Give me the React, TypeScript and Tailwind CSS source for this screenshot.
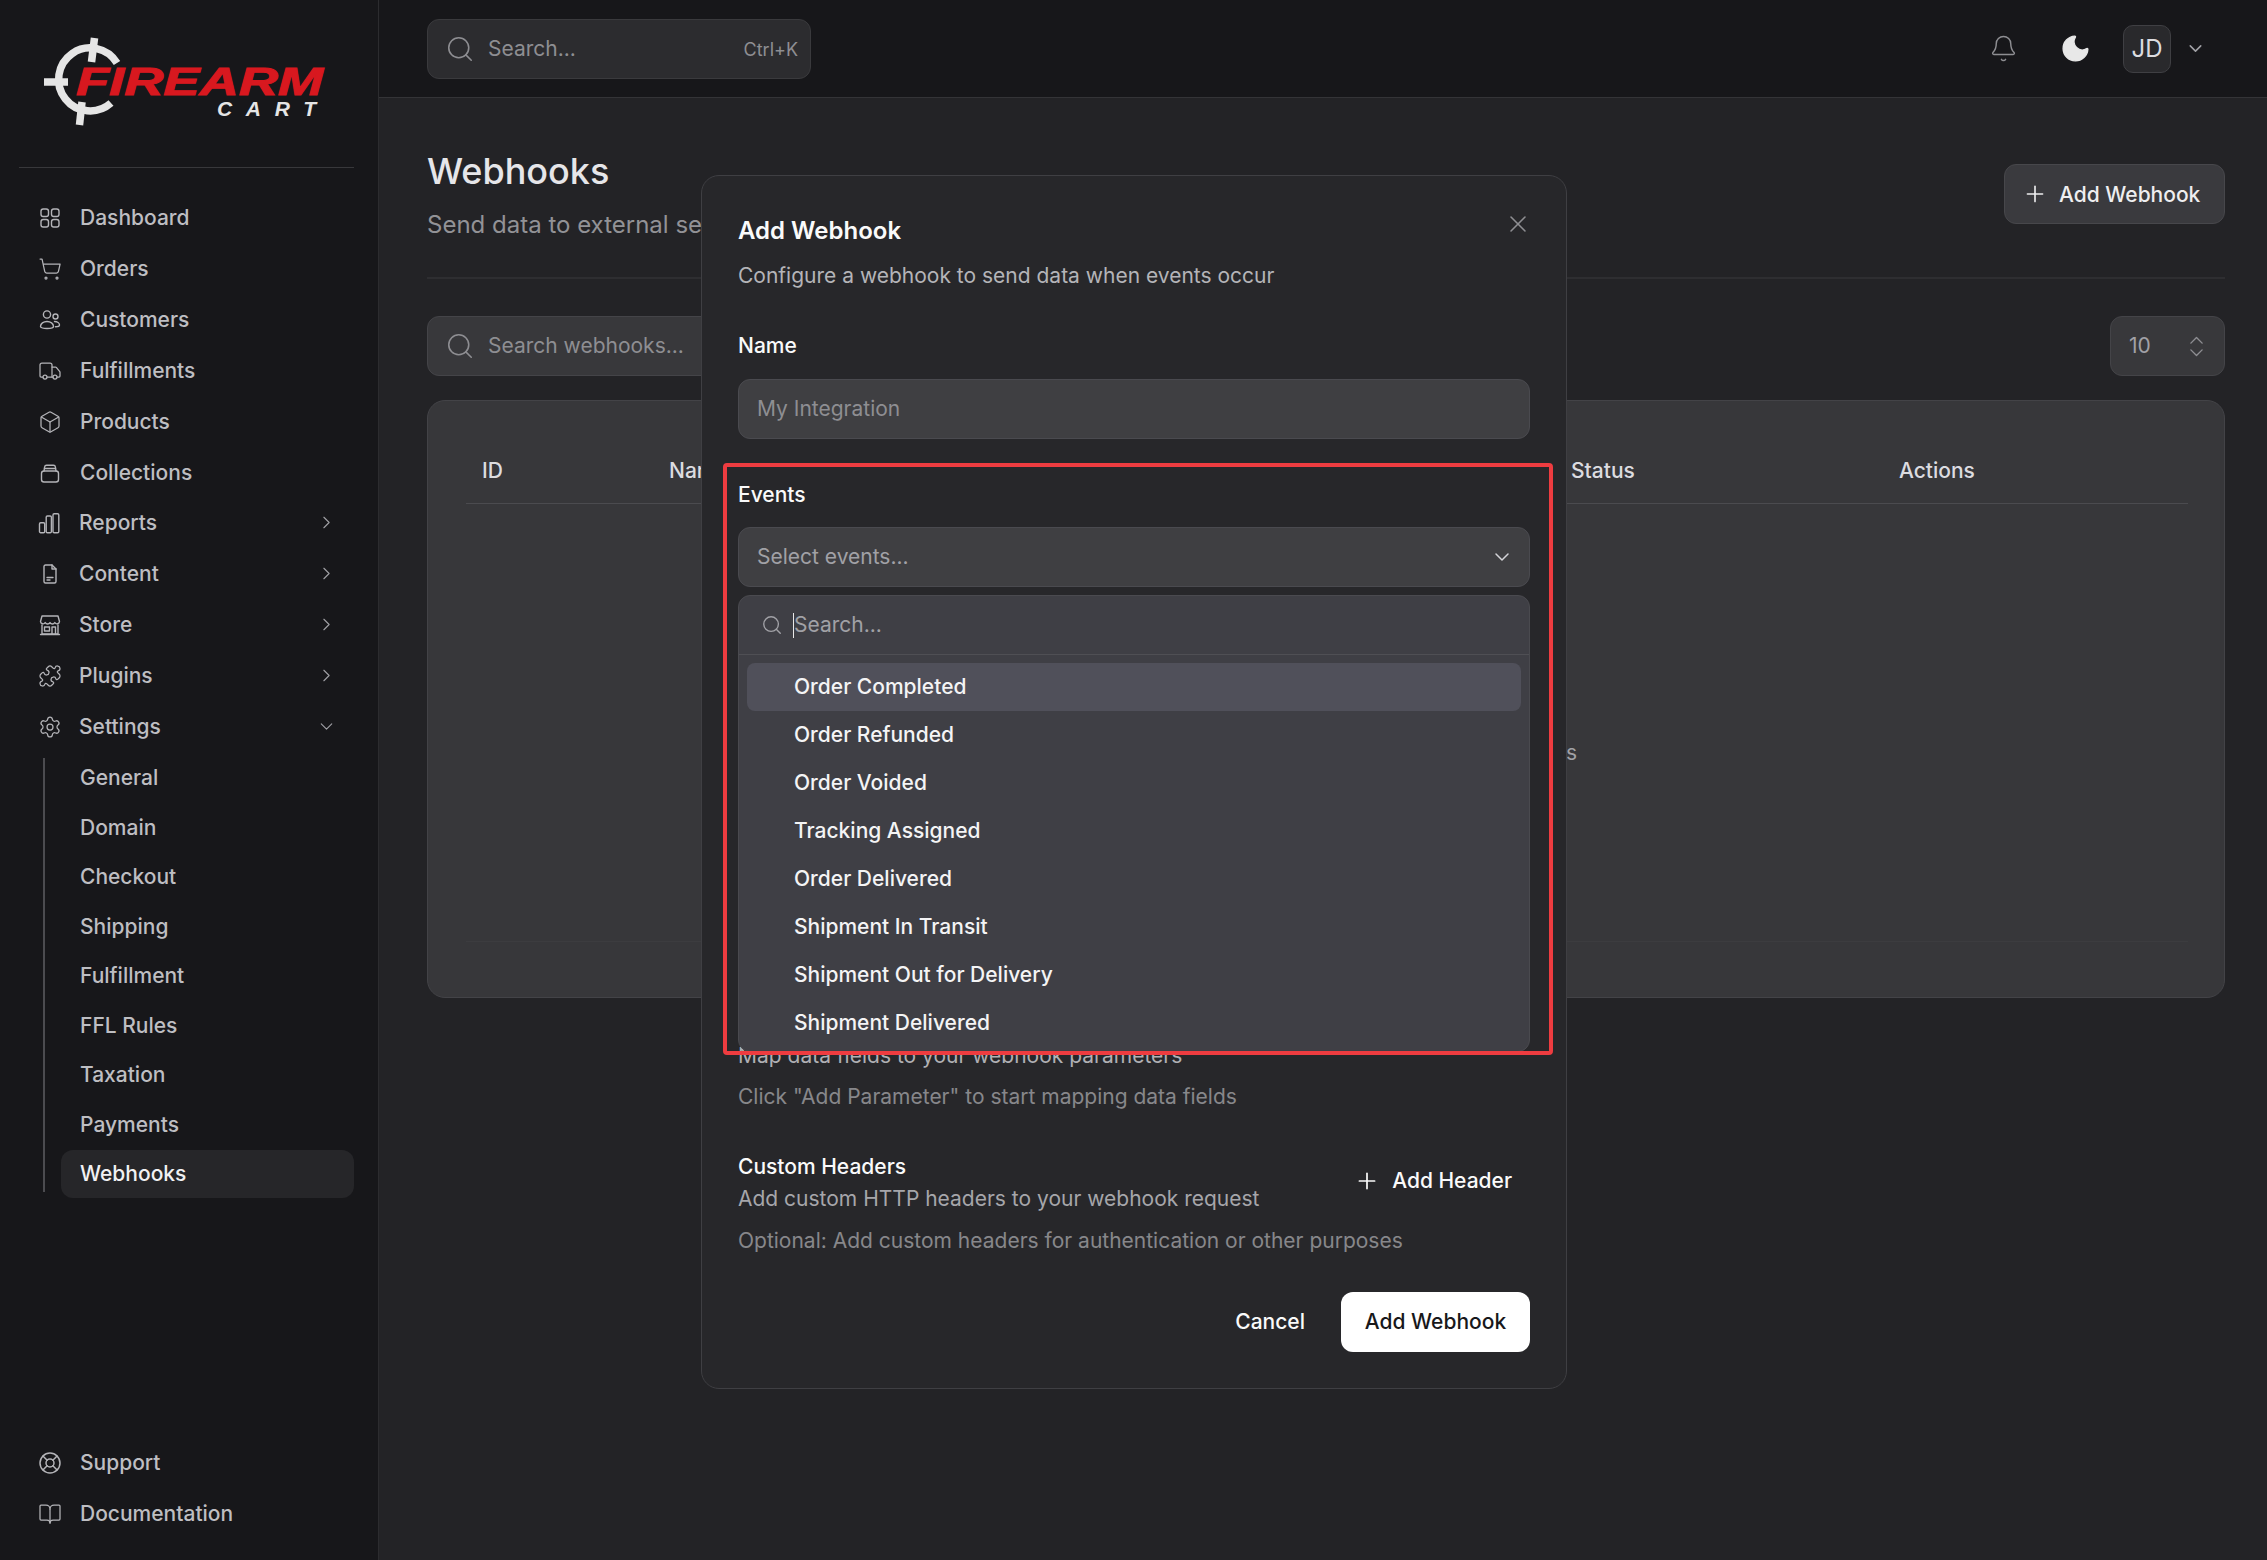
import React from "react";
import {
  BookOpen,
  Box,
  ChevronDown,
  ChevronRight,
  ChevronsUpDown,
  LifeBuoy,
  Moon,
  Bell,
  Plus,
  Puzzle,
  Search,
  Settings,
  ShoppingCart,
  Truck,
  X,
} from "lucide-react";

function Svg({ children }: any) {
  return (
    <svg
      width="24"
      height="24"
      viewBox="0 0 24 24"
      fill="none"
      stroke="currentColor"
      strokeWidth={1.4}
      strokeLinecap="round"
      strokeLinejoin="round"
    >
      {children}
    </svg>
  );
}

const DashboardIcon = () => (
  <Svg>
    <rect x="3" y="3" width="7.5" height="7.5" rx="2.2" />
    <rect x="13.5" y="3" width="7.5" height="7.5" rx="2.2" />
    <rect x="3" y="13.5" width="7.5" height="7.5" rx="2.2" />
    <rect x="13.5" y="13.5" width="7.5" height="7.5" rx="2.2" />
  </Svg>
);

const CustomersIcon = () => (
  <Svg>
    <circle cx="9" cy="6.5" r="3.6" />
    <circle cx="17.5" cy="8.5" r="2.5" />
    <path d="M2.5 18.5c0-3 3-5 6.5-5s6.5 2 6.5 5c0 1.2-3 2-6.5 2s-6.5-.8-6.5-2z" />
    <path d="M16.5 13.5c2.8 0 5 1.5 5 3.5 0 1.2-2 1.8-4 1.8" />
  </Svg>
);

const CollectionsIcon = () => (
  <Svg>
    <rect x="3.5" y="10" width="17" height="11" rx="2.5" />
    <path d="M6 10l.6-4a2 2 0 0 1 2-1.7h6.8a2 2 0 0 1 2 1.7L18 10" />
    <path d="M6.5 7.5h11" />
  </Svg>
);

const ReportsIcon = () => (
  <Svg>
    <rect x="1.5" y="11.7" width="5.2" height="10" rx="1.2" />
    <rect x="8.2" y="5" width="5.2" height="16.7" rx="1.2" />
    <rect x="15" y="2.7" width="5.8" height="19" rx="1.2" />
  </Svg>
);

const ContentIcon = () => (
  <Svg>
    <path d="M14 3H7.5A1.5 1.5 0 0 0 6 4.5v15A1.5 1.5 0 0 0 7.5 21h9a1.5 1.5 0 0 0 1.5-1.5V7z" />
    <path d="M14 3v4h4" />
    <path d="M9 15.5h6" />
    <path d="M9 18h3" />
  </Svg>
);

const StoreIcon = () => (
  <Svg>
    <path d="M4 3h16l1.5 5.5a2.5 2.5 0 0 1-4.7 1 2.7 2.7 0 0 1-4.8 0 2.7 2.7 0 0 1-4.8 0 2.5 2.5 0 0 1-4.7-1z" />
    <path d="M4 12v9h16v-9" />
    <path d="M2.5 21.5h19" />
    <path d="M14 21v-7h3.5v7" />
    <rect x="6.5" y="14" width="5" height="4" />
  </Svg>
);

const topNav = [
  { label: "Dashboard", icon: <DashboardIcon /> },
  { label: "Orders", icon: <ShoppingCart size={24} strokeWidth={1.25} /> },
  { label: "Customers", icon: <CustomersIcon /> },
  { label: "Fulfillments", icon: <Truck size={24} strokeWidth={1.25} /> },
  { label: "Products", icon: <Box size={24} strokeWidth={1.25} /> },
  { label: "Collections", icon: <CollectionsIcon /> },
];

const groupNav = [
  { label: "Reports", icon: <ReportsIcon /> },
  { label: "Content", icon: <ContentIcon /> },
  { label: "Store", icon: <StoreIcon /> },
  { label: "Plugins", icon: <Puzzle size={24} strokeWidth={1.25} /> },
];

const settingsNav = [
  "General",
  "Domain",
  "Checkout",
  "Shipping",
  "Fulfillment",
  "FFL Rules",
  "Taxation",
  "Payments",
];

const events = [
  "Order Completed",
  "Order Refunded",
  "Order Voided",
  "Tracking Assigned",
  "Order Delivered",
  "Shipment In Transit",
  "Shipment Out for Delivery",
  "Shipment Delivered",
];

function Logo() {
  return (
    <svg width="378" height="167" viewBox="0 0 378 167" className="block">
      <g stroke="#e5e5e5" strokeWidth="7.5" fill="none">
        <path d="M117 63 A31.5 31.5 0 1 0 111 103" />
        <path d="M94.5 38 L91.5 62" />
        <path d="M44 82 H68" />
        <path d="M82 102 L79.5 125" />
      </g>
      <text
        x="76"
        y="95"
        textLength="247"
        lengthAdjust="spacingAndGlyphs"
        fontFamily="Liberation Sans, sans-serif"
        fontWeight="700"
        fontStyle="italic"
        fontSize="39"
        fill="#d8181f"
        stroke="#d8181f"
        strokeWidth="1"
      >
        FIREARM
      </text>
      <text
        x="217"
        y="116"
        textLength="99"
        lengthAdjust="spacing"
        fontFamily="Liberation Sans, sans-serif"
        fontWeight="700"
        fontStyle="italic"
        fontSize="21"
        fill="#e5e5e5"
      >
        CART
      </text>
    </svg>
  );
}

function NavRow({ icon, label, gap, trailing }: any) {
  return (
    <div className="flex h-[51px] items-center pl-[19px] pr-[17px] text-[21px] font-medium text-[#bebec2]">
      <span className="flex w-[24px] shrink-0 justify-center text-[#b4b4b8]">{icon}</span>
      <span className={gap}>{label}</span>
      <span className="ml-auto text-[#a1a1a6]">{trailing}</span>
    </div>
  );
}

function Sidebar() {
  return (
    <aside className="flex h-full w-[379px] shrink-0 flex-col border-r border-[#2c2c2f] bg-[#17171a]">
      <Logo />
      <div className="ml-[19px] mr-[24px] h-[1px] bg-[#38383b]" />
      <nav className="ml-[19px] mr-[24px] mt-[24px]">
        {topNav.map((item) => (
          <NavRow key={item.label} icon={item.icon} label={item.label} gap="ml-[18px]" />
        ))}
        <div className="-mt-[1px]">
          {groupNav.map((item) => (
            <NavRow
              key={item.label}
              icon={item.icon}
              label={item.label}
              gap="ml-[17px]"
              trailing={<ChevronRight size={21} strokeWidth={1.25} />}
            />
          ))}
          <NavRow
            icon={<Settings size={24} strokeWidth={1.25} />}
            label="Settings"
            gap="ml-[17px]"
            trailing={<ChevronDown size={21} strokeWidth={1.25} />}
          />
        </div>
        <div className="flex">
          <div className="my-[6px] ml-[24px] w-[2px] shrink-0 bg-[#4c4c50]" />
          <div className="ml-[16px] mt-[2px] flex flex-1 flex-col gap-[1.5px]">
            {settingsNav.map((label) => (
              <div key={label} className="flex h-[48px] items-center pl-[19px] text-[21px] font-medium text-[#bebec2]">
                {label}
              </div>
            ))}
            <div className="flex h-[48px] items-center rounded-[12px] bg-[#262629] pl-[19px] text-[21px] font-medium text-[#f1f1f3]">
              Webhooks
            </div>
          </div>
        </div>
      </nav>
      <div className="ml-[19px] mr-[24px] mt-auto pb-[21px]">
        <NavRow icon={<LifeBuoy size={24} strokeWidth={1.5} />} label="Support" gap="ml-[18px]" />
        <NavRow icon={<BookOpen size={24} strokeWidth={1.25} />} label="Documentation" gap="ml-[18px]" />
      </div>
    </aside>
  );
}

function Topbar() {
  return (
    <header className="flex h-[98px] shrink-0 items-center border-b border-[#343437] bg-[#17171a] pl-[48px] pr-[61px]">
      <div className="flex h-[60px] w-[384px] items-center rounded-[12px] border border-[#3a3a3d] bg-[#2c2c2f] pl-[17px] pr-[12px]">
        <Search size={30} strokeWidth={1.25} className="text-[#8e8e92]" />
        <span className="ml-[13px] pt-[1px] text-[21px] text-[#8e8e92]">Search...</span>
        <span className="ml-auto pt-[1px] text-[18px] text-[#8e8e92]">Ctrl+K</span>
      </div>
      <div className="ml-auto flex items-center">
        <Bell size={29} strokeWidth={1.2} className="text-[#8e8e92]" />
        <Moon size={33} strokeWidth={1} className="ml-[41px] fill-[#e8e8e8] text-[#e8e8e8]" />
        <div className="ml-[31px] flex h-[48px] w-[48px] items-center justify-center rounded-[10px] border border-[#3f3f43] bg-[#29292c] text-[24px] text-[#dcdce0]">
          JD
        </div>
        <ChevronDown size={21} strokeWidth={1.75} className="ml-[14px] text-[#a1a1a6]" />
      </div>
    </header>
  );
}

function WebhooksTable() {
  return (
    <div className="mt-[24px] flex h-[598px] flex-col rounded-[18px] border border-[#434347] bg-[#37373a] pl-[38px] pr-[36px]">
      <div className="grid h-[103px] shrink-0 grid-cols-[187px_902px_328px_1fr] items-center border-b border-[#4b4b4f] pl-[16px] pt-[38px] text-[21px] font-medium text-[#dcdce0]">
        <span>ID</span>
        <span>Name</span>
        <span>Status</span>
        <span>Actions</span>
      </div>
      <div className="h-[438px] border-b border-[#3c3c3f] pl-[10px] pt-[233px] text-center text-[21px] text-[#a1a1a6]">
        Create your first webhook to start sending events
      </div>
    </div>
  );
}

function MainContent() {
  return (
    <main className="flex-1 pl-[48px] pr-[42px]">
      <div className="flex h-[181px] border-b-[2px] border-[#2e2e31]">
        <div className="pt-[51px]">
          <h1 className="text-[36px] font-medium leading-[45px] text-[#e6e6e9]">Webhooks</h1>
          <p className="mt-[15px] text-[24px] leading-[32px] text-[#929296]">
            Send data to external services when events occur in your store
          </p>
        </div>
        <button className="ml-auto mt-[66px] flex h-[60px] w-[221px] items-center rounded-[12px] border border-[#47474b] bg-[#3a3a3e] pl-[17px] text-[21px] font-medium text-[#eeeef0]">
          <Plus size={26} strokeWidth={1.5} />
          <span className="ml-[11px] pt-[1px]">Add Webhook</span>
        </button>
      </div>
      <div className="mt-[37px] flex items-center justify-between">
        <div className="flex h-[60px] w-[560px] items-center rounded-[12px] border border-[#444448] bg-[#38383b] pl-[17px] text-[21px] text-[#8e8e92]">
          <Search size={30} strokeWidth={1.25} />
          <span className="ml-[13px]">Search webhooks...</span>
        </div>
        <div className="flex h-[60px] w-[115px] items-center rounded-[12px] border border-[#444448] bg-[#38383b] pl-[18px] pr-[14px] text-[21px] text-[#a1a1a6]">
          <span>10</span>
          <ChevronsUpDown size={27} strokeWidth={1.25} className="ml-auto text-[#8e8e92]" />
        </div>
      </div>
      <WebhooksTable />
    </main>
  );
}

function EventsDropdown() {
  return (
    <div className="absolute left-0 right-0 top-full z-10 mt-[8px] h-[457px] overflow-hidden rounded-[12px] border border-[#4a4a4f] bg-[#3f3f45]">
      <div className="flex h-[59px] items-center border-b border-[#4f4f54] pl-[22px]">
        <Search size={22} strokeWidth={1.5} className="text-[#a1a1a6]" />
        <span className="ml-[10px] h-[25px] w-[1px] bg-[#e8e8e8]" />
        <span className="text-[21px] text-[#a1a1a6]">Search...</span>
      </div>
      <div className="px-[8px] pt-[8px]">
        {events.map((name, i) => (
          <div
            key={name}
            className={`flex h-[48px] items-center rounded-[8px] pl-[47px] text-[21px] font-medium text-[#f4f4f5] ${
              i === 0 ? "bg-[#50505a]" : ""
            }`}
          >
            {name}
          </div>
        ))}
      </div>
    </div>
  );
}

function AddWebhookModal() {
  return (
    <div className="fixed inset-0 z-50 flex items-start justify-center pl-[1px] pt-[175px]">
      <div className="relative h-[1214px] w-[866px] rounded-[18px] border border-[#3f3f43] bg-[#27272a] px-[36px] pt-[36px]">
        <X size={28} strokeWidth={1.3} className="absolute right-[34px] top-[34px] text-[#8e8e92]" />
        <h2 className="pt-[1px] text-[24px] font-semibold leading-[36px] text-[#fafafa]">Add Webhook</h2>
        <p className="mt-[11px] text-[21px] leading-[32px] text-[#b4b4b8]">
          Configure a webhook to send data when events occur
        </p>
        <label className="mt-[42px] block text-[21px] font-medium leading-[24px] text-[#fafafa]">Name</label>
        <div className="mt-[21px] flex h-[60px] items-center rounded-[12px] border border-[#4a4a4f] bg-[#3f3f42] pl-[18px] text-[21px] text-[#8e8e92]">
          My Integration
        </div>
        <div className="relative mt-[44px]">
          <div className="pointer-events-none absolute -left-[15px] -right-[23px] -top-[20px] z-20 h-[592px] rounded-[4px] border-[4px] border-[#ee3c40]" />
          <label className="block text-[21px] font-medium leading-[24px] text-[#fafafa]">Events</label>
          <div className="mt-[20px] flex h-[60px] items-center rounded-[12px] border border-[#4a4a4f] bg-[#3f3f42] pl-[18px] pr-[15px] text-[21px] text-[#a1a1a6]">
            Select events...
            <ChevronDown size={24} strokeWidth={1.5} className="ml-auto text-[#d4d4d8]" />
          </div>
          <EventsDropdown />
        </div>
        <div className="mt-[421px] flex items-start justify-between">
          <div>
            <div className="text-[21px] font-medium leading-[32px] text-[#fafafa]">Parameter Mappings</div>
            <div className="text-[21px] leading-[32px] text-[#b0b0b4]">Map data fields to your webhook parameters</div>
          </div>
        </div>
        <p className="mt-[9px] text-[21px] leading-[32px] text-[#87878b]">
          Click "Add Parameter" to start mapping data fields
        </p>
        <div className="mt-[38px] flex items-center justify-between">
          <div>
            <div className="text-[21px] font-medium leading-[32px] text-[#fafafa]">Custom Headers</div>
            <div className="text-[21px] leading-[32px] text-[#a6a6aa]">Add custom HTTP headers to your webhook request</div>
          </div>
          <button className="mb-[4px] flex items-center pr-[18px] text-[21px] font-medium text-[#fafafa]">
            <Plus size={26} strokeWidth={1.6} />
            <span className="ml-[12px]">Add Header</span>
          </button>
        </div>
        <p className="mt-[10px] text-[21px] leading-[32px] text-[#87878b]">
          Optional: Add custom headers for authentication or other purposes
        </p>
        <div className="mt-[35px] flex items-center justify-end">
          <button className="text-[21px] font-medium text-[#fafafa]">Cancel</button>
          <button className="ml-[36px] h-[60px] w-[189px] rounded-[12px] bg-white text-[21px] font-medium text-[#18181b]">
            Add Webhook
          </button>
        </div>
      </div>
    </div>
  );
}

export default function App() {
  return (
    <div className="flex h-screen w-full overflow-hidden bg-[#232326] [font-family:Inter,sans-serif]">
      <Sidebar />
      <div className="flex min-w-0 flex-1 flex-col">
        <Topbar />
        <MainContent />
      </div>
      <AddWebhookModal />
    </div>
  );
}
